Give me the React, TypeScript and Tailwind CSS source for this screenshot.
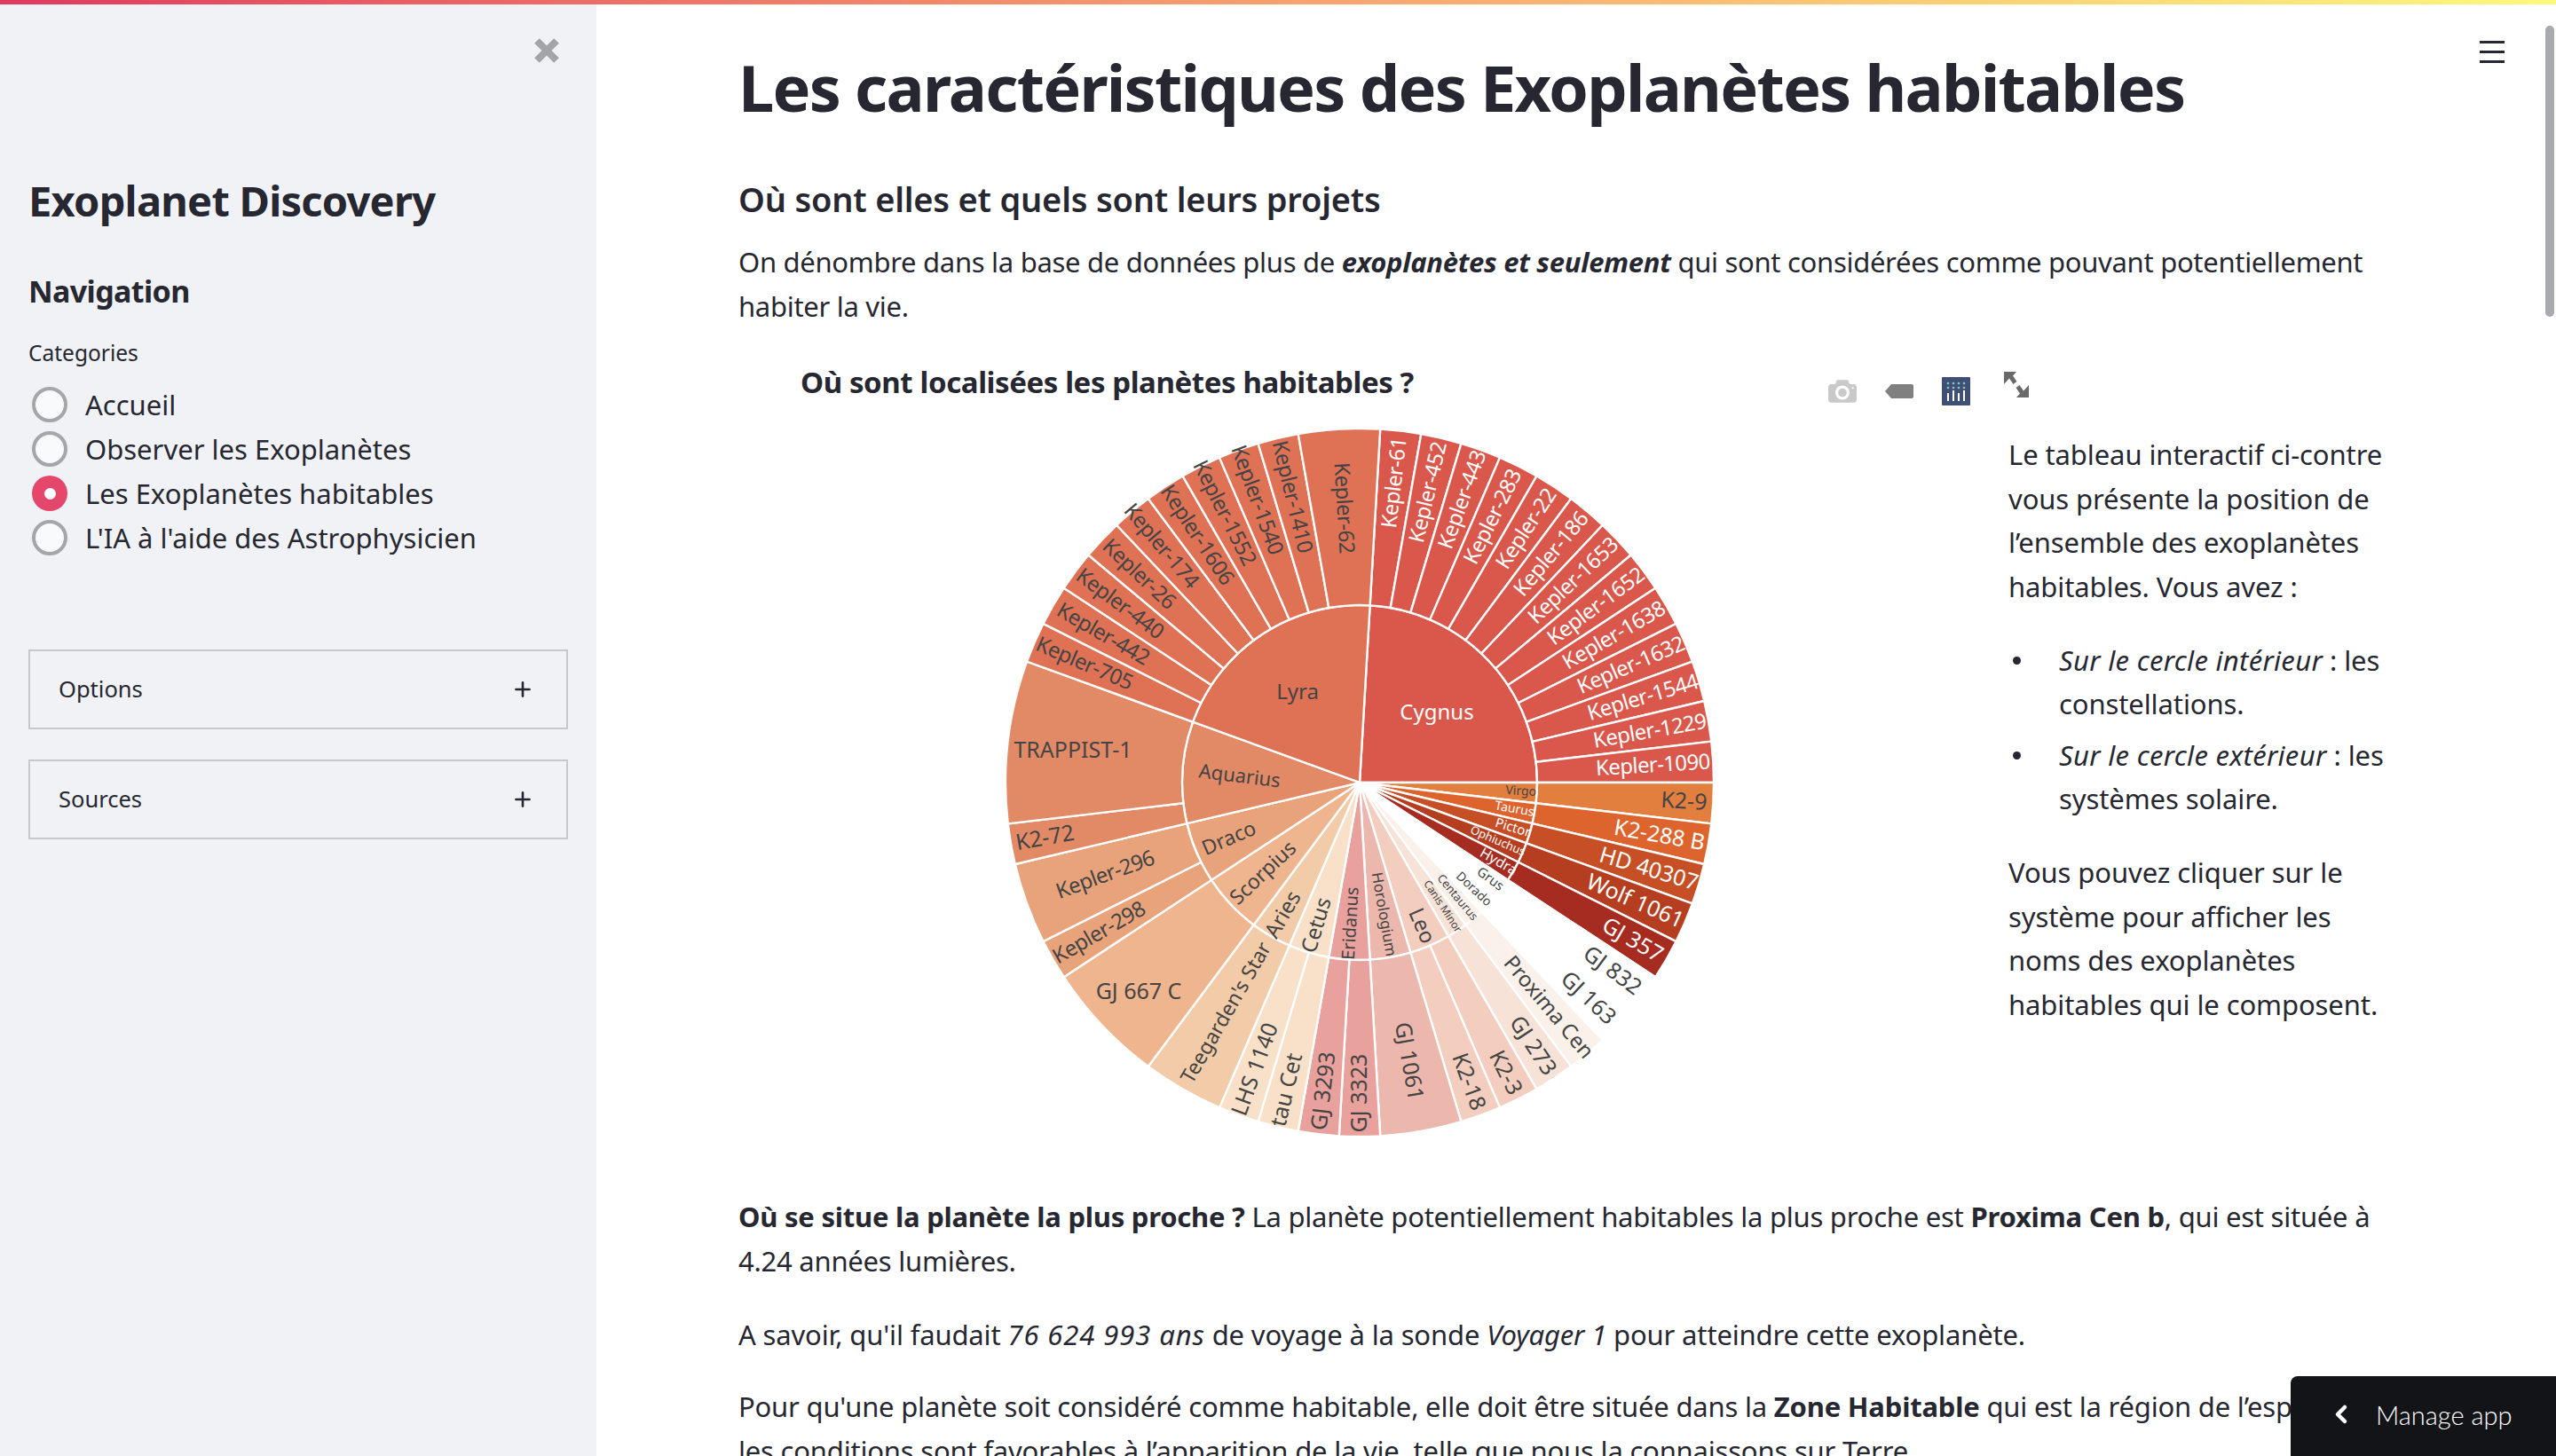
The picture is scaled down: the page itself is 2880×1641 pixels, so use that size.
import React from "react";
import { ChevronLeft, Plus } from "lucide-react";

type Sys = [string, number, number];
type Group = {
  name: string;
  color: string;
  light?: boolean;
  size: number;
  r?: number;
  flat?: [number, number, number];
  children: Sys[];
};

// clockwise from the top, one unit = one planet
const GROUPS: Group[] = [
  { name: "Cygnus", color: "#da574b", light: true, size: 24, flat: [87, -81, 0], children: [
    ["Kepler-61", 1, 340], ["Kepler-452", 1, 336], ["Kepler-443", 1, 339], ["Kepler-283", 1, 335],
    ["Kepler-22", 1, 342], ["Kepler-186", 1, 336], ["Kepler-1653", 1, 331], ["Kepler-1652", 1, 332],
    ["Kepler-1638", 1, 331], ["Kepler-1632", 1, 333], ["Kepler-1544", 1, 333], ["Kepler-1229", 1, 332],
    ["Kepler-1090", 1, 331],
  ] },
  { name: "Virgo", color: "#e27e3e", size: 14, r: 182, children: [["K2-9", 1, 366]] },
  { name: "Taurus", color: "#de642d", light: true, size: 14, r: 177, children: [["K2-288 B", 1, 343]] },
  { name: "Pictor", color: "#c64f26", light: true, size: 15, r: 180, children: [["HD 40307", 1, 340]] },
  { name: "Ophiuchus", color: "#b63e20", light: true, size: 13, r: 169, children: [["Wolf 1061", 1, 338]] },
  { name: "Hydra", color: "#a62b20", light: true, size: 16, r: 180, children: [["GJ 357", 1, 355]] },
  { name: "Grus", color: "#ffffff", size: 15, r: 183, children: [["GJ 832", 1, 355]] },
  { name: "Dorado", color: "#ffffff", size: 14, r: 176, children: [["GJ 163", 1, 354]] },
  { name: "Centaurus", color: "#fbf1eb", size: 13, r: 170, children: [["Proxima Cen", 1, 331]] },
  { name: "Canis Minor", color: "#f7e2d7", size: 12, r: 168, children: [["GJ 273", 1, 355]] },
  { name: "Leo", color: "#f3cdbd", size: 24, r: 176, children: [["K2-3", 1, 366], ["K2-18", 1, 359]] },
  { name: "Horologium", color: "#ecb7ac", size: 17, r: 151, children: [["GJ 1061", 2, 319]] },
  { name: "Eridanus", color: "#e8a19d", size: 20, r: 159, children: [["GJ 3323", 1, 350], ["GJ 3293", 1, 350]] },
  { name: "Cetus", color: "#f8e1c8", size: 24, r: 168, children: [["tau Cet", 1, 356], ["LHS 1140", 1, 344]] },
  { name: "Aries", color: "#f2cba9", size: 24, r: 172, children: [["Teegarden's Star", 2, 300]] },
  { name: "Scorpius", color: "#eeb58f", size: 23, r: 149, children: [["GJ 667 C", 3, -1]] },
  { name: "Draco", color: "#e9a37b", size: 23, r: 160, children: [["Kepler-298", 1, 339], ["Kepler-296", 2, 305]] },
  { name: "Aquarius", color: "#e28a66", size: 22, flat: [-135, -9, 7], children: [["K2-72", 1, 360], ["TRAPPIST-1", 4, -2]] },
  { name: "Lyra", color: "#df7155", size: 24, flat: [-70, -104, 0], children: [
    ["Kepler-705", 1, 338], ["Kepler-442", 1, 334], ["Kepler-440", 1, 337], ["Kepler-26", 1, 342],
    ["Kepler-174", 1, 348], ["Kepler-1606", 1, 334], ["Kepler-1552", 1, 340], ["Kepler-1540", 1, 339],
    ["Kepler-1410", 1, 331], ["Kepler-62", 2, 310],
  ] },
];

const UNIT = 360 / 54;
const C = 410;
const R1 = 200;
const R2 = 399;

const pt = (a: number, r: number): [number, number] => {
  const t = ((a - 90) * Math.PI) / 180;
  return [C + r * Math.cos(t), C + r * Math.sin(t)];
};

const sector = (a0: number, a1: number, r0: number, r1: number) => {
  const [x0, y0] = pt(a0, r1);
  const [x1, y1] = pt(a1, r1);
  const large = a1 - a0 > 180 ? 1 : 0;
  if (r0 === 0) return `M${C} ${C}L${x0} ${y0}A${r1} ${r1} 0 ${large} 1 ${x1} ${y1}Z`;
  const [x2, y2] = pt(a1, r0);
  const [x3, y3] = pt(a0, r0);
  return `M${x0} ${y0}A${r1} ${r1} 0 ${large} 1 ${x1} ${y1}L${x2} ${y2}A${r0} ${r0} 0 ${large} 0 ${x3} ${y3}Z`;
};

const sysSize = (name: string) => {
  if (name.startsWith("Kepler")) return 24;
  if (name.startsWith("Teegarden")) return 23;
  return name.startsWith("Proxima") ? 24 : 25;
};

const Label = ({ text, a, r, size, light, track }: { text: string; a: number; r: number; size: number; light?: boolean; track?: number }) => {
  const [x, y] = pt(a, r);
  const norm = ((a % 360) + 360) % 360;
  const rot = norm <= 178 ? norm - 90 : norm - 270;
  return (
    <text x={x} y={y} dy={-2} fontSize={size} letterSpacing={track} fill={light ? "#ffffff" : "#444444"} textAnchor="middle" dominantBaseline="central" transform={`rotate(${rot} ${x} ${y})`}>
      {text}
    </text>
  );
};

const Sunburst = () => {
  const shapes: React.ReactNode[] = [];
  const labels: React.ReactNode[] = [];
  let angle = UNIT / 2;
  GROUPS.forEach((g) => {
    const total = g.children.reduce((s, c) => s + c[1], 0) * UNIT;
    shapes.push(<path key={g.name} d={sector(angle, angle + total, 0, R1)} fill={g.color} stroke="#fff" strokeWidth={2.4} />);
    if (g.flat) {
      labels.push(
        <text key={g.name} x={C + g.flat[0]} y={C + g.flat[1]} fontSize={g.size} fill={g.light ? "#fff" : "#444"} textAnchor="middle" dominantBaseline="central" transform={`rotate(${g.flat[2]} ${C + g.flat[0]} ${C + g.flat[1]})`}>
          {g.name}
        </text>
      );
    } else {
      labels.push(<Label key={g.name} text={g.name} a={angle + total / 2} r={g.r ?? 150} size={g.size} light={g.light} />);
    }
    let b = angle;
    g.children.forEach(([name, units, r]) => {
      const w = units * UNIT;
      shapes.push(<path key={name} d={sector(b, b + w, R1, R2)} fill={g.color} stroke="#fff" strokeWidth={2.4} />);
      if (r === -1) {
        labels.push(<text key={name} x={C - 249} y={C + 234} fontSize={25} fill="#444" textAnchor="middle" dominantBaseline="central">{name}</text>);
      } else if (r === -2) {
        labels.push(<text key={name} x={C - 323} y={C - 38} fontSize={25} fill="#444" textAnchor="middle" dominantBaseline="central">{name}</text>);
      } else {
        labels.push(<Label key={name} text={name} a={b + w / 2} r={r} size={sysSize(name)} track={name.startsWith("Kepler") ? -0.6 : undefined} light={g.light} />);
      }
      b += w;
    });
    angle += total;
  });
  return (
    <svg width={820} height={820} viewBox="0 0 820 820" className="block" style={{ fontFamily: '"Noto Sans", sans-serif' }}>
      {shapes}
      {labels}
    </svg>
  );
};

const ModeBar = () => (
  <div className="absolute left-[1228px] top-[14px] flex items-center">
    <svg width="32" height="32" viewBox="0 0 1000 1000" fill="#c9c9c9">
      <g transform="matrix(1 0 0 -1 0 850)">
        <path d="m500 450c-83 0-150-67-150-150 0-83 67-150 150-150 83 0 150 67 150 150 0 83-67 150-150 150z m400 150h-120c-16 0-34 13-39 29l-31 93c-6 15-23 28-40 28h-340c-16 0-34-13-39-28l-31-94c-6-15-23-28-40-28h-120c-55 0-100-45-100-100v-450c0-55 45-100 100-100h800c55 0 100 45 100 100v450c0 55-45 100-100 100z m-400-550c-138 0-250 112-250 250 0 138 112 250 250 250 138 0 250-112 250-250 0-138-112-250-250-250z m365 380c-19 0-35 16-35 35 0 19 16 35 35 35 19 0 35-16 35-35 0-19-16-35-35-35z" />
      </g>
    </svg>
    <svg width="32" height="16" viewBox="0 0 32 16" className="ml-[32px]" fill="#808080">
      <path d="M0 8 7 0H30a2 2 0 0 1 2 2V14a2 2 0 0 1-2 2H7Z" />
    </svg>
    <svg width="32" height="32" viewBox="0 0 32 32" className="ml-[32px]">
      <rect width="32" height="32" rx="1" fill="#3f4f75" />
      {[6, 12, 18, 24].map((x) => [7, 12].map((y) => <circle key={`${x}-${y}`} cx={x + 1} cy={y} r="1.3" fill="#80cfbe" />))}
      <rect x="6" y="18" width="2" height="9" fill="#fff" />
      <rect x="12" y="15" width="2" height="12" fill="#fff" />
      <rect x="18" y="18" width="2" height="9" fill="#fff" />
      <rect x="24" y="15" width="2" height="12" fill="#fff" />
    </svg>
    <svg width="28" height="29" viewBox="0 0 28 29" className="ml-[38px] -translate-y-[8px]" fill="#6a6a6a">
      <path d="M0 0H14L10 4.500 14.500 11 10.500 14 6 7.500 0 14Z" />
      <path d="M28 29H14L18 24.500 13.500 18 17.500 15 22 21.500 28 15Z" />
    </svg>
  </div>
);

const RADIOS = ["Accueil", "Observer les Exoplanètes", "Les Exoplanètes habitables", "L'IA à l'aide des Astrophysicien"];

const Sidebar = () => (
  <aside className="w-[672px] shrink-0 bg-[#f0f2f6] h-full text-[#262730]">
    <div className="h-[196px] flex justify-end pt-[43px] pr-[42px]">
      <svg width="28" height="28" viewBox="0 0 28 28" stroke="#a3a5a9" strokeWidth="8">
        <path d="M3 3 25 25M25 3 3 25" />
      </svg>
    </div>
    <div className="pl-[32px] pr-[25px]">
      <h1 className="text-[47px] leading-[60px] font-bold tracking-[-0.75px] whitespace-nowrap">Exoplanet Discovery</h1>
      <h2 className="mt-[50px] text-[34px] leading-[44px] font-bold tracking-[-0.6px]">Navigation</h2>
      <div className="mt-[31px] text-[24.500px] leading-[34px]">Categories</div>
      <div className="mt-[16px] flex flex-col">
        {RADIOS.map((label, i) => (
          <div key={label} className="h-[50px] flex items-center">
            {i === 2 ? (
              <span className="ml-[4px] w-[40px] h-[40px] rounded-full bg-[#e5466c] flex items-center justify-center">
                <span className="w-[13px] h-[13px] rounded-full bg-white" />
              </span>
            ) : (
              <span className="ml-[4px] w-[40px] h-[40px] rounded-full bg-[#f9fafc] border-4 border-[#a4a6aa]" />
            )}
            <span className="ml-[20px] text-[31px] whitespace-nowrap">{label}</span>
          </div>
        ))}
      </div>
      <div className="mt-[101px] flex flex-col gap-[34px]">
        {["Options", "Sources"].map((t) => (
          <div key={t} className="h-[90px] w-[608px] border-2 border-[#c6c8cd] flex items-center justify-between pl-[32px] pr-[36px]">
            <span className="text-[25.500px] -translate-y-[1px]">{t}</span>
            <Plus className="w-[26px] h-[26px]" strokeWidth={2.4} />
          </div>
        ))}
      </div>
    </div>
  </aside>
);

export default function App() {
  return (
    <div className="relative w-[2880px] h-[1641px] overflow-hidden flex bg-white text-[#262730]" style={{ fontFamily: '"Noto Sans", sans-serif' }}>
      <div className="absolute z-10 top-0 left-0 right-0 h-[5px] bg-linear-to-r from-[#e0385f] to-[#fdf87a]" />
      <Sidebar />
      <main className="flex-1 h-full overflow-hidden pl-[160px] pt-[48px] whitespace-nowrap">
        <h1 className="text-[72px] leading-[100px] font-bold tracking-[-1.750px]">Les caractéristiques des Exoplanètes habitables</h1>
        <h3 className="mt-[51px] text-[38px] leading-[50px] font-semibold tracking-[-0.2px]">Où sont elles et quels sont leurs projets</h3>
        <p className="mt-[22px] text-[31px] leading-[49.600px] tracking-[-0.3px]">
          On dénombre dans la base de données plus de <b><i>exoplanètes et seulement</i></b> qui sont considérées comme pouvant potentiellement<br />
          habiter la vie.
        </p>
        <div className="mt-[41px] flex">
          <div className="relative w-[1400px] shrink-0">
            <div className="pl-[70px] h-[40px] text-[33px] leading-[40px] font-bold tracking-[-0.4px]">Où sont localisées les planètes habitables ?</div>
            <div className="mt-[21px] flex justify-center">
              <Sunburst />
            </div>
            <ModeBar />
          </div>
          <div className="ml-[31px] pt-[77px] text-[31px] leading-[49.600px] tracking-[-0.1px]">
            <p>
              Le tableau interactif ci-contre<br />vous présente la position de<br />l’ensemble des exoplanètes<br />habitables. Vous avez :
            </p>
            <ul className="mt-[33px] flex flex-col gap-[8px]">
              <li className="flex">
                <span className="mt-[20px] ml-[5px] mr-[43px] w-[9px] h-[9px] rounded-full bg-[#262730]" />
                <span><i className="tracking-[0.3px]">Sur le cercle intérieur</i> : les<br />constellations.</span>
              </li>
              <li className="flex">
                <span className="mt-[20px] ml-[5px] mr-[43px] w-[9px] h-[9px] rounded-full bg-[#262730]" />
                <span><i className="tracking-[0.3px]">Sur le cercle extérieur</i> : les<br />systèmes solaire.</span>
              </li>
            </ul>
            <p className="mt-[33px]">
              Vous pouvez cliquer sur le<br />système pour afficher les<br />noms des exoplanètes<br />habitables qui le composent.
            </p>
          </div>
        </div>
        <div className="mt-[55px] text-[31px] leading-[49.600px]">
          <p className="tracking-[-0.24px]">
            <b>Où se situe la planète la plus proche ?</b> La planète potentiellement habitables la plus proche est <b>Proxima Cen b</b>, qui est située à<br />
            4.24 années lumières.
          </p>
          <p className="mt-[34px] tracking-[-0.15px]">
            A savoir, qu'il faudait <i className="tracking-[0.9px]">76 624 993 ans</i> de voyage à la sonde <i>Voyager 1</i> pour atteindre cette exoplanète.
          </p>
          <p className="mt-[31px] tracking-[-0.2px]">
            Pour qu'une planète soit considéré comme habitable, elle doit être située dans la <b>Zone Habitable</b> qui est la région de l’espace où<br />
            les conditions sont favorables à l’apparition de la vie, telle que nous la connaissons sur Terre.
          </p>
        </div>
      </main>
      <div className="absolute right-[2px] top-[29px] w-[10px] h-[328px] rounded-full bg-[#a8aaad]" />
      <div className="absolute left-[2794px] top-[46px] w-[28px] flex flex-col gap-[8px]">
        <span className="h-[3px] bg-[#262730]" />
        <span className="h-[3px] bg-[#262730]" />
        <span className="h-[3px] bg-[#262730]" />
      </div>
      <div className="absolute right-0 bottom-0 w-[299px] h-[90px] bg-[#131418] rounded-tl-[8px] flex items-center text-white">
        <ChevronLeft className="ml-[41px] w-[32px] h-[32px] -translate-y-[2px]" strokeWidth={3.400} />
        <span className="ml-[23px] text-[29px] font-light whitespace-nowrap -translate-y-[1px]" style={{ fontFamily: "Lato, sans-serif" }}>Manage app</span>
      </div>
    </div>
  );
}
